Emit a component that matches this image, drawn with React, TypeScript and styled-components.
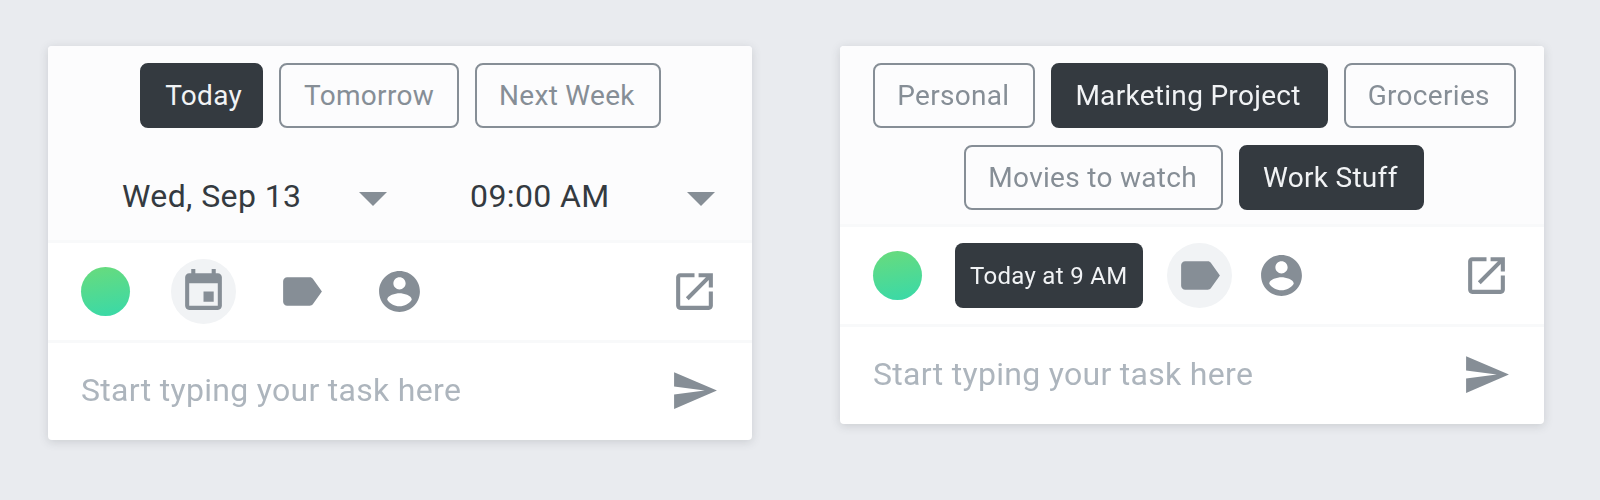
import React from "react";
import styled, { createGlobalStyle } from "styled-components";

const Global = createGlobalStyle`
  html, body { margin: 0; padding: 0; background: #e9ebef; }
  * { box-sizing: border-box; }
`;

const Page = styled.div`
  width: 1600px;
  height: 500px;
  padding: 46px 56px 0 48px;
  display: flex;
  align-items: flex-start;
  gap: 88px;
  font-family: Roboto, "Liberation Sans", sans-serif;
  overflow: hidden;
  filter: blur(0.4px);
`;

const Card = styled.section`
  width: 704px;
  background: #fff;
  border-radius: 4px;
  box-shadow: 0 2px 10px rgba(52, 58, 64, 0.17);
  overflow: hidden;
`;

const Header = styled.div`
  background: #fcfcfd;
  padding: 17px 0 14px;
  border-bottom: 3px solid #f8f9fa;
`;

const ChipRow = styled.div<{ $mb?: number; $shift?: number }>`
  display: flex;
  justify-content: center;
  gap: 16px;
  margin-bottom: ${(p) => p.$mb ?? 0}px;
  padding-left: ${(p) => p.$shift ?? 0}px;
`;

const Chip = styled.button<{ $active?: boolean; $pl?: number; $pr?: number }>`
  height: 65px;
  padding: 0 ${(p) => p.$pr ?? 24}px 0 ${(p) => p.$pl ?? 22}px;
  border-radius: 8px;
  border: 2px solid ${(p) => (p.$active ? "#343a40" : "#868e96")};
  background: ${(p) => (p.$active ? "#343a40" : "transparent")};
  color: ${(p) => (p.$active ? "#f1f3f5" : "#868e96")};
  font: 400 28px/1 Roboto, sans-serif;
  letter-spacing: 0.3px;
`;

const DateRow = styled.div`
  display: flex;
  justify-content: space-between;
  margin-top: 48px;
  padding: 0 37px 0 74px;
  height: 50px;
  align-items: flex-start;
`;

const Selector = styled.div<{ $w: number }>`
  width: ${(p) => p.$w}px;
  display: flex;
  align-items: center;
  justify-content: space-between;
  color: #343a40;
  font-size: 32px;
  line-height: 40px;
  letter-spacing: 0.4px;
`;

const Caret = styled.span`
  width: 0;
  height: 0;
  margin-top: 6px;
  border-left: 14px solid transparent;
  border-right: 14px solid transparent;
  border-top: 14px solid #868e96;
`;

const Toolbar = styled.div`
  display: flex;
  align-items: center;
  padding: 16px 33px;
  border-bottom: 3px solid #f8f9fa;
`;

const Dot = styled.span`
  width: 49px;
  height: 49px;
  border-radius: 50%;
  background: linear-gradient(170deg, #69db7c, #38d9a9);
  flex: none;
`;

const Slot = styled.span<{ $on?: boolean; $ml: number }>`
  width: 65px;
  height: 65px;
  margin-left: ${(p) => p.$ml}px;
  border-radius: 50%;
  background: ${(p) => (p.$on ? "#f1f3f5" : "transparent")};
  display: flex;
  align-items: center;
  justify-content: center;
  flex: none;
`;

const DueChip = styled.span<{ $ml: number }>`
  height: 65px;
  margin-left: ${(p) => p.$ml}px;
  padding: 0 16px 0 15px;
  background: #343a40;
  color: #f1f3f5;
  border-radius: 8px;
  display: flex;
  align-items: center;
  font-size: 24px;
  letter-spacing: 0.3px;
  flex: none;
`;

const Icon = styled.svg<{ $mr?: boolean }>`
  width: 49px;
  height: 49px;
  fill: #868e96;
  flex: none;
  ${(p) => (p.$mr ? "margin-left: auto;" : "")}
`;

const InputRow = styled.div`
  display: flex;
  align-items: center;
  height: 97px;
  padding: 0 33px 3px;
`;

const TaskInput = styled.input`
  flex: 1;
  border: 0;
  outline: 0;
  padding: 0;
  background: transparent;
  font: 400 32px/40px Roboto, sans-serif;
  letter-spacing: 0.3px;
  color: #343a40;
  &::placeholder {
    color: #adb5bd;
    opacity: 1;
  }
`;

const P = {
  event: "M17 12h-5v5h5v-5zM16 1v2H8V1H6v2H5c-1.11 0-1.99.9-1.99 2L3 19c0 1.1.89 2 2 2h14c1.1 0 2-.9 2-2V5c0-1.1-.9-2-2-2h-1V1h-2zm3 18H5V8h14v11z",
  label: "M17.63 5.84C17.27 5.33 16.67 5 16 5L5 5.01C3.9 5.01 3 5.9 3 7v10c0 1.1.9 1.99 2 1.99L16 19c.67 0 1.27-.33 1.63-.84L22 12l-4.37-6.16z",
  person: "M12 2C6.48 2 2 6.48 2 12s4.48 10 10 10 10-4.48 10-10S17.52 2 12 2zm0 3c1.66 0 3 1.34 3 3s-1.34 3-3 3-3-1.34-3-3 1.34-3 3-3zm0 14.2c-2.5 0-4.71-1.28-6-3.22.03-1.99 4-3.08 6-3.08 1.99 0 5.97 1.09 6 3.08-1.29 1.94-3.5 3.22-6 3.22z",
  open: "M19 19H5V5h7V3H5c-1.11 0-2 .9-2 2v14c0 1.1.89 2 2 2h14c1.1 0 2-.9 2-2v-7h-2v7zM14 3v2h3.59l-9.83 9.83 1.41 1.41L19 6.41V10h2V3h-7z",
  send: "M2.01 21L23 12 2.01 3 2 10l15 2-15 2z",
};

const Glyph = ({ d, end }: { d: string; end?: boolean }) => (
  <Icon viewBox="0 0 24 24" $mr={end} aria-hidden="true">
    <path d={d} />
  </Icon>
);

const Composer = () => (
  <InputRow>
    <TaskInput placeholder="Start typing your task here" readOnly />
    <Glyph d={P.send} end />
  </InputRow>
);

export default function App() {
  return (
    <>
      <Global />
      <Page>
        <Card>
          <Header>
            <ChipRow $shift={1}>
              <Chip $active $pl={23} $pr={19}>Today</Chip>
              <Chip $pl={23} $pr={23}>Tomorrow</Chip>
              <Chip>Next Week</Chip>
            </ChipRow>
            <DateRow>
              <Selector $w={265}>
                Wed, Sep 13
                <Caret />
              </Selector>
              <Selector $w={245}>
                09:00 AM
                <Caret />
              </Selector>
            </DateRow>
          </Header>
          <Toolbar>
            <Dot />
            <Slot $on $ml={41}>
              <Glyph d={P.event} />
            </Slot>
            <Slot $ml={33}>
              <Glyph d={P.label} />
            </Slot>
            <Slot $ml={33}>
              <Glyph d={P.person} />
            </Slot>
            <Glyph d={P.open} end />
          </Toolbar>
          <Composer />
        </Card>
        <Card>
          <Header>
            <ChipRow $mb={17} $shift={5}>
              <Chip>Personal</Chip>
              <Chip $active $pr={25}>Marketing Project</Chip>
              <Chip>Groceries</Chip>
            </ChipRow>
            <ChipRow $shift={4}>
              <Chip>Movies to watch</Chip>
              <Chip $active>Work Stuff</Chip>
            </ChipRow>
          </Header>
          <Toolbar>
            <Dot />
            <DueChip $ml={33}>Today at 9 AM</DueChip>
            <Slot $on $ml={24}>
              <Glyph d={P.label} />
            </Slot>
            <Slot $ml={17}>
              <Glyph d={P.person} />
            </Slot>
            <Glyph d={P.open} end />
          </Toolbar>
          <Composer />
        </Card>
      </Page>
    </>
  );
}
